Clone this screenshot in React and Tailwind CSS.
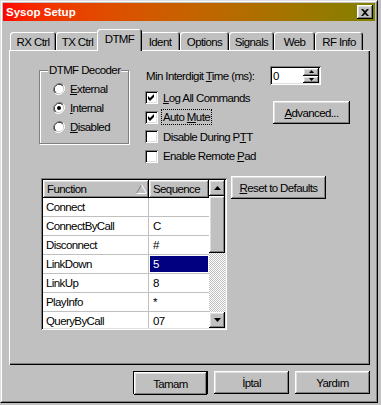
import React from 'react';

const raised =
  'shadow-[inset_-1px_-1px_0_#000,inset_1px_1px_0_#fff,inset_-2px_-2px_0_#808080,inset_2px_2px_0_#dfdfdf]';
const sunken =
  'shadow-[inset_1px_1px_0_#808080,inset_-1px_-1px_0_#fff,inset_2px_2px_0_#000,inset_-2px_-2px_0_#dfdfdf]';

const tabs = [
  { label: 'RX Ctrl', w: 'w-[46px]' },
  { label: 'TX Ctrl', w: 'w-[43px]' },
  { label: 'DTMF', w: 'w-[45px]', active: true },
  { label: 'Ident', w: 'w-[40px]' },
  { label: 'Options', w: 'w-[49px]' },
  { label: 'Signals', w: 'w-[45px]' },
  { label: 'Web', w: 'w-[41px]' },
  { label: 'RF Info', w: 'w-[48px]' },
];

const rows = [
  ['Connect', ''],
  ['ConnectByCall', 'C'],
  ['Disconnect', '#'],
  ['LinkDown', '5'],
  ['LinkUp', '8'],
  ['PlayInfo', '*'],
  ['QueryByCall', '07'],
];

function U({ children }) {
  return <span className="underline underline-offset-[1px] decoration-1">{children}</span>;
}

function Radio({ checked, children }) {
  return (
    <div className="flex items-center h-[19px]">
      <svg width="12" height="12" viewBox="0 0 12 12" className="shrink-0">
        <path d="M10.2 1.8 A6 6 0 0 0 1.8 10.2" fill="none" stroke="#808080" strokeWidth="1" />
        <path d="M9.5 2.5 A5 5 0 0 0 2.5 9.5" fill="none" stroke="#000" strokeWidth="1" />
        <path d="M1.8 10.2 A6 6 0 0 0 10.2 1.8" fill="none" stroke="#fff" strokeWidth="1" />
        <circle cx="6" cy="6" r="4.3" fill="#fff" />
        {checked && <circle cx="6" cy="6" r="2" fill="#000" />}
      </svg>
      <span className="ml-[5px]">{children}</span>
    </div>
  );
}

function Check({ checked, focus, children }) {
  return (
    <div className="flex items-center h-[19.5px]">
      <div className={`w-[13px] h-[13px] bg-white shrink-0 ${sunken}`}>
        {checked && (
          <svg width="13" height="13" viewBox="0 0 13 13">
            <path d="M3 5v3l2 2l4-4v-3l-4 4z" fill="#000" />
          </svg>
        )}
      </div>
      <span className={`ml-[4px] px-px ${focus ? 'outline outline-1 outline-dotted outline-black' : ''}`}>
        {children}
      </span>
    </div>
  );
}

function Button({ className = '', children }) {
  return (
    <div className={`h-[23px] bg-[#c0c0c0] flex items-center justify-center ${raised} ${className}`}>
      {children}
    </div>
  );
}

function Arrow({ up }) {
  return (
    <svg width="7" height="4" viewBox="0 0 7 4">
      <path d={up ? 'M3.5 0L7 4H0z' : 'M0 0h7L3.5 4z'} fill="#000" />
    </svg>
  );
}

export default function App() {
  return (
    <div className="w-[381px] h-[405px] bg-[#c0c0c0] overflow-hidden whitespace-nowrap text-[11.5px] tracking-[-0.6px] leading-[14px] text-black font-['Liberation_Sans',Arial,sans-serif]">
      <div className="w-[378px] h-[403px] border border-t-[#dfdfdf] border-l-[#dfdfdf] border-r-black border-b-black">
        <div className="h-full border border-t-white border-l-white border-r-[#808080] border-b-[#808080] p-px flex flex-col">
          {/* title bar */}
          <div className="h-[18px] flex items-center bg-gradient-to-r from-[#ff0000] to-[#808000] pl-[3px] pr-[2px]">
            <span className="text-white font-bold text-[11.5px] tracking-normal">Sysop Setup</span>
            <div className={`ml-auto w-[16px] h-[14px] bg-[#c0c0c0] flex items-center justify-center ${raised}`}>
              <svg width="8" height="7" viewBox="0 0 8 7">
                <path d="M0 0h2l2 2l2-2h2l-3 3.5l3 3.5h-2l-2-2l-2 2h-2l3-3.5z" fill="#000" />
              </svg>
            </div>
          </div>

          {/* tabs */}
          <div className="mt-[8px] h-[21px] flex items-end pl-[7px] relative z-10">
            {tabs.map((t) => (
              <div
                key={t.label}
                className={`${t.w} shrink-0 bg-[#c0c0c0] flex justify-center rounded-t-[3px] shadow-[inset_1px_1px_0_#fff,inset_-1px_0_0_#000,inset_-2px_0_0_#808080] ${
                  t.active ? 'h-[22px] -mx-[2px] px-[2px] -mb-px pt-[3px] relative z-10' : 'h-[18px] pt-[3px]'
                }`}
              >
                {t.label}
              </div>
            ))}
          </div>

          {/* panel */}
          <div className="ml-[6px] w-[361px] h-[315px] shadow-[inset_1px_1px_0_#fff,inset_-1px_-1px_0_#000,inset_-2px_-2px_0_#808080]">
            <div className="h-[113px] flex items-start pt-[13px] pl-[30px]">
              <fieldset className="w-[90px] h-[81px] border border-[#808080] shadow-[inset_1px_1px_0_#fff,1px_1px_0_#fff] m-0 p-0">
                <legend className="ml-[8px] px-px bg-[#c0c0c0] leading-[14px]">DTMF Decoder</legend>
                <div className="pt-[2px] pl-[13px] flex flex-col">
                  <Radio>
                    <U>E</U>xternal
                  </Radio>
                  <Radio checked>
                    <U>I</U>nternal
                  </Radio>
                  <Radio>
                    <U>D</U>isabled
                  </Radio>
                </div>
              </fieldset>

              <div className="ml-[16px] flex flex-col">
                <div className="mt-[3px] flex items-center h-[19px]">
                  <span className="w-[125px] pl-px">
                    Min Interdigit <U>T</U>ime (ms):
                  </span>
                  <div className={`w-[51px] h-[19px] bg-white flex items-center ${sunken}`}>
                    <span className="pl-[3px] flex-1">0</span>
                    <div className="flex flex-col mr-[2px]">
                      <div className={`w-[16px] h-[7.5px] bg-[#c0c0c0] flex items-center justify-center ${raised}`}>
                        <svg width="5" height="3" viewBox="0 0 5 3"><path d="M2.5 0L5 3H0z" fill="#000" /></svg>
                      </div>
                      <div className={`w-[16px] h-[7.5px] bg-[#c0c0c0] flex items-center justify-center ${raised}`}>
                        <svg width="5" height="3" viewBox="0 0 5 3"><path d="M0 0h5L2.5 3z" fill="#000" /></svg>
                      </div>
                    </div>
                  </div>
                </div>
                <div className="mt-[3px] flex items-start">
                  <div className="w-[128px] flex flex-col">
                    <Check checked>
                      <U>L</U>og All Commands
                    </Check>
                    <Check checked focus>
                      Auto <U>M</U>ute
                    </Check>
                    <Check>
                      Disable During P<U>T</U>T
                    </Check>
                    <Check>
                      Enable Remote <U>P</U>ad
                    </Check>
                  </div>
                  <Button className="mt-[13px] w-[77px]">
                    <span>
                      <U>A</U>dvanced...
                    </span>
                  </Button>
                </div>
              </div>
            </div>

            <div className="flex items-start pt-[13px] pl-[32px] gap-[4px]">
              <div className={`mt-[2px] w-[186px] h-[152px] bg-white p-[2px] flex ${sunken}`}>
                <div className="w-[166px] h-[148px] overflow-hidden flex flex-col">
                  <div className="flex h-[18px] shrink-0">
                    <div className={`w-[106px] bg-[#c0c0c0] flex items-center pl-[4px] ${raised}`}>
                      <span className="flex-1">Function</span>
                      <svg width="11" height="10" viewBox="0 0 11 10" className="mr-[2px]">
                        <path d="M5.5 0.5L0.5 9.5" stroke="#808080" fill="none" />
                        <path d="M5.5 0.5L10.5 9.5H0.5" stroke="#fff" fill="none" />
                      </svg>
                    </div>
                    <div className={`w-[60px] bg-[#c0c0c0] flex items-center pl-[4px] ${raised}`}>Sequence</div>
                  </div>
                  {rows.map(([fn, seq]) => (
                    <div key={fn} className="flex h-[19px] shrink-0 border-b border-[#c0c0c0]">
                      <div className="w-[106px] border-r border-[#c0c0c0] flex items-center pl-[3px]">{fn}</div>
                      <div className="w-[60px] p-px flex">
                        <div
                          className={`flex-1 flex items-center pl-[3px] ${
                            fn === 'LinkDown' ? 'bg-[#000080] text-white' : ''
                          }`}
                        >
                          {seq}
                        </div>
                      </div>
                    </div>
                  ))}
                </div>
                <div className="w-[16px] h-[148px] flex flex-col">
                  <div className={`h-[16px] bg-[#c0c0c0] flex items-center justify-center ${raised}`}>
                    <Arrow up />
                  </div>
                  <div className={`h-[57px] bg-[#c0c0c0] ${raised}`} />
                  <div className="flex-1 bg-[repeating-conic-gradient(#fff_0_25%,#c0c0c0_0_50%)] bg-[length:2px_2px]" />
                  <div className={`h-[16px] bg-[#c0c0c0] flex items-center justify-center ${raised}`}>
                    <Arrow />
                  </div>
                </div>
              </div>
              <Button className="w-[95px]">
                <span>
                  <U>R</U>eset to Defaults
                </span>
              </Button>
            </div>
          </div>

          {/* dialog buttons */}
          <div className="mt-[6px] flex justify-end gap-[6px] pr-[5px]">
            <div className="w-[75px] h-[23px] border border-black">
              <Button className="h-[21px]">Tamam</Button>
            </div>
            <Button className="w-[75px]">İptal</Button>
            <Button className="w-[75px]">Yardım</Button>
          </div>
        </div>
      </div>
    </div>
  );
}
